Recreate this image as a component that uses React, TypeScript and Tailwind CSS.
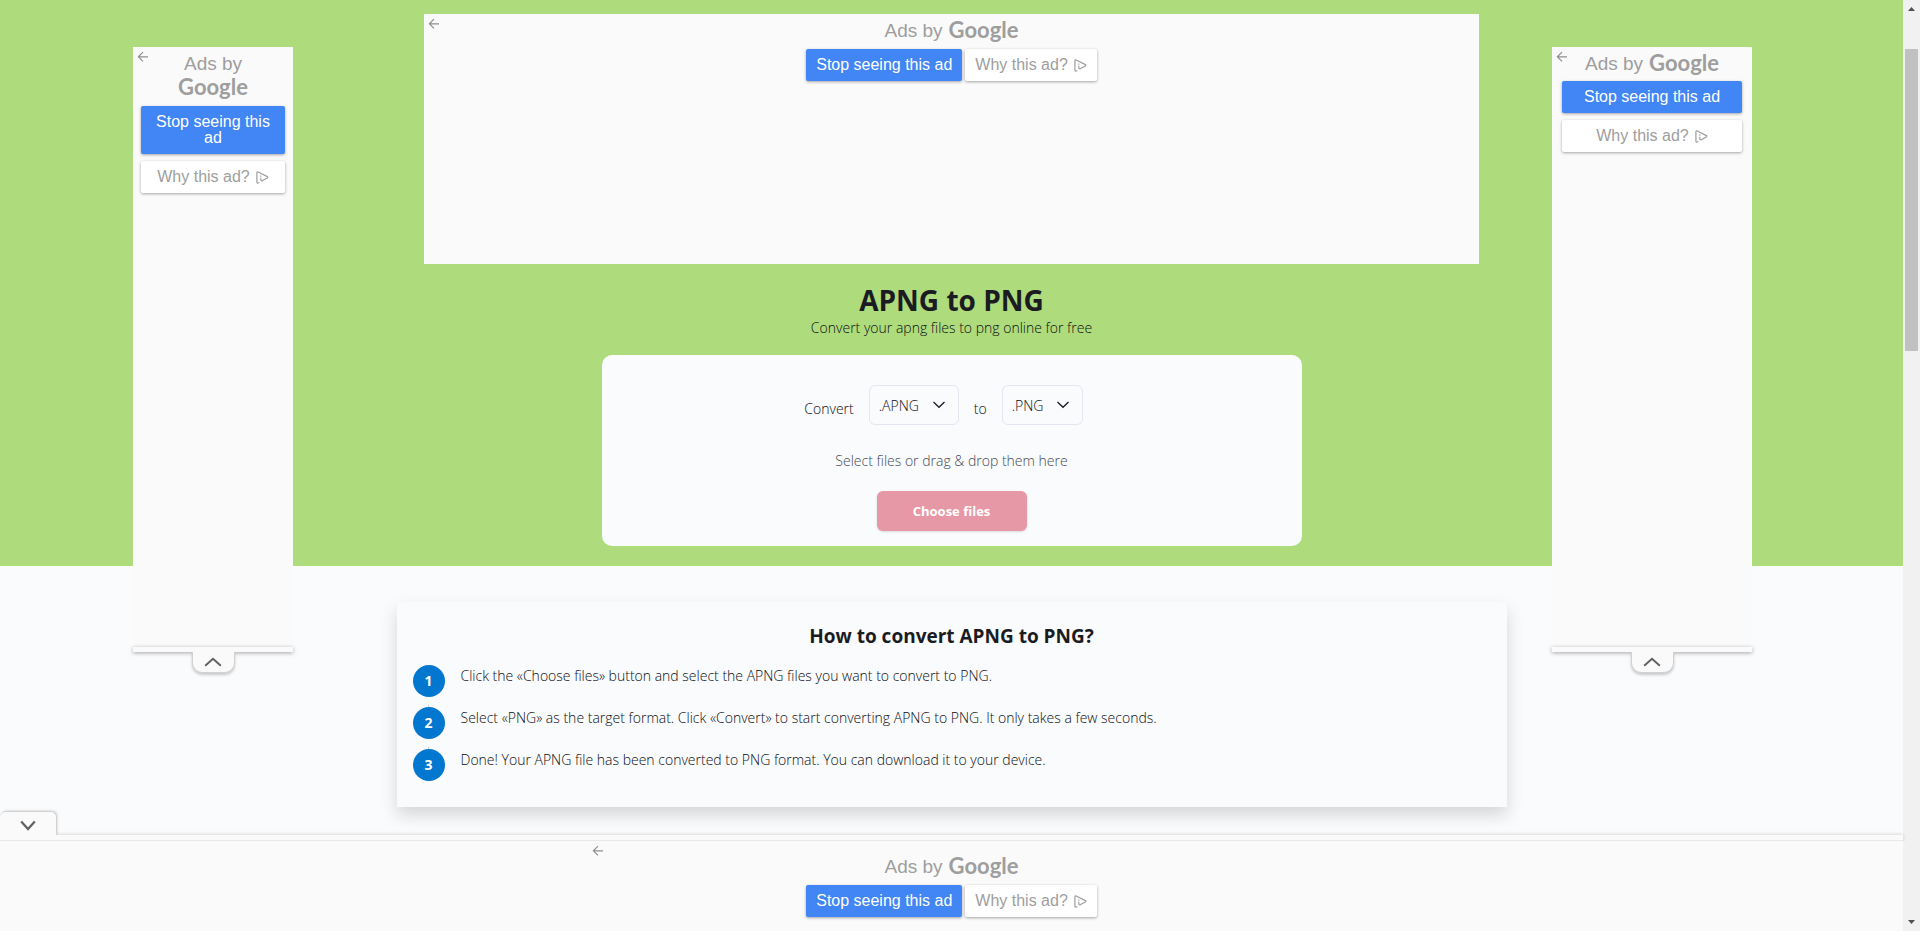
import {clsx} from 'clsx';

type AdLayout = 'inline' | 'stacked' | 'narrow';

const STEPS = [
  'Click the «Choose files» button and select the APNG files you want to convert to PNG.',
  'Select «PNG» as the target format. Click «Convert» to start converting APNG to PNG. It only takes a few seconds.',
  'Done! Your APNG file has been converted to PNG format. You can download it to your device.',
];

export default function App() {
  return (
    <div className="flex h-screen overflow-hidden bg-[#fafbfd] font-['Open_Sans',sans-serif] text-sm font-light text-[#0c0e12]">
      <main className="relative min-w-0 flex-1">
        <section className="flex flex-col items-center bg-[#aedc7c] pt-[14px] pb-5">
          <div className="relative h-[250px] w-full max-w-[1055px] bg-[#fafafa]">
            <AdContent layout="inline" />
          </div>
          <h1 className="mt-[18px] text-[28px] leading-9 font-bold text-[#1b1b22]">
            APNG to PNG
          </h1>
          <p className="leading-5">
            Convert your apng files to png online for free
          </p>
          <ConvertForm />
        </section>

        <section className="mx-auto mt-9 w-full max-w-[1110px] bg-[#fafbfd] px-4 pt-5 pb-4 shadow-[0_8px_16px_rgba(0,0,0,0.15)]">
          <h2 className="text-center text-[19px] leading-7 font-bold text-[#1b1b22]">
            How to convert APNG to PNG?
          </h2>
          <ol className="mt-[15px]">
            {STEPS.map((step, i) => (
              <Step key={step} number={i + 1} text={step} />
            ))}
          </ol>
        </section>

        <SideAd className="left-[133px] w-40" layout="narrow" />
        <SideAd className="right-[151px] w-[200px]" layout="stacked" />
        <AnchorAd />
      </main>
      <PageScrollbar />
    </div>
  );
}

function ConvertForm() {
  return (
    <form className="mt-[17px] flex w-full max-w-[700px] flex-col items-center rounded-[10px] bg-[#fafbfd] pt-[30px] pb-[15px]">
      <div className="mr-4 flex items-center gap-[15px]">
        <label htmlFor="from" className="pt-2">
          Convert
        </label>
        <FormatSelect id="from" value=".APNG" className="w-[90px]" />
        <label htmlFor="to" className="pt-2">
          to
        </label>
        <FormatSelect id="to" value=".PNG" className="w-[81px]" />
      </div>
      <p className="mt-[26px] leading-5 text-[#454a56]">
        Select files or drag &amp; drop them here
      </p>
      <button
        type="button"
        className="mt-5 h-10 w-[150px] rounded-md bg-[#e698a6] text-[13px] font-bold text-white shadow-sm"
      >
        Choose files
      </button>
    </form>
  );
}

function FormatSelect({
  id,
  value,
  className,
}: {
  id: string;
  value: string;
  className: string;
}) {
  return (
    <div className={clsx('relative', className)}>
      <select
        id={id}
        defaultValue={value}
        className="h-10 w-full appearance-none rounded-md border border-[#e4e5f1] bg-transparent pt-px pl-[9px]"
      >
        <option>{value}</option>
      </select>
      <svg
        className="pointer-events-none absolute top-4 right-[14px] h-2 w-3 text-[#1b1b22]"
        viewBox="0 0 12 8"
        fill="none"
        stroke="currentColor"
        strokeWidth="1.3"
      >
        <path d="M0.5 1 6 6.3 11.5 1" />
      </svg>
    </div>
  );
}

function Step({number, text}: {number: number; text: string}) {
  return (
    <li className="group flex gap-4">
      <div className="flex flex-col items-center">
        <span className="flex size-8 items-center justify-center rounded-full bg-[#0177d0] font-bold text-white">
          {number}
        </span>
        {/* Connector to the next step */}
        <span className="mt-2 h-0.5 w-px bg-[#cfcfd4] group-last:invisible" />
      </div>
      <p className="pt-px leading-5">{text}</p>
    </li>
  );
}

function AdContent({layout}: {layout: AdLayout}) {
  const inline = layout === 'inline';

  return (
    <div
      className={clsx(
        "pt-[5px] text-center font-['Liberation_Sans',sans-serif] font-normal",
        layout === 'stacked' && 'px-[10px]',
        layout === 'narrow' && 'px-2',
      )}
    >
      <button
        type="button"
        aria-label="Back"
        className="absolute top-1 left-1 text-[#8f8f8f]"
      >
        <svg className="size-3" viewBox="0 0 12 12" fill="none" stroke="currentColor" strokeWidth="1.2">
          <path d="M6 1.2 1.4 5.8 6 10.4M1.4 5.8H11" />
        </svg>
      </button>
      <div
        className={clsx(
          'flex justify-center text-[19px] leading-6 text-[#9e9e9e]',
          layout === 'narrow' ? 'flex-col items-center' : 'items-start gap-1.5',
        )}
      >
        <span>Ads by</span>
        <span className="font-['Lato',sans-serif] text-[22px] leading-[22px] font-bold">Google</span>
      </div>
      <div
        className={clsx(
          'flex justify-center text-base leading-4',
          layout === 'stacked' ? 'mt-[5px]' : 'mt-1.5',
          layout === 'narrow' && 'pt-0.5',
          inline ? 'items-center gap-[3px]' : 'flex-col gap-[7px]',
        )}
      >
        <button
          type="button"
          className="rounded-xs bg-[#4285f4] px-[10px] py-2 text-white shadow-[0_1px_3px_rgba(0,0,0,0.35)]"
        >
          Stop seeing this ad
        </button>
        <button
          type="button"
          className="flex items-center justify-center gap-1.5 rounded-xs bg-white px-[10px] py-2 text-[#9e9e9e] shadow-[0_1px_3px_rgba(0,0,0,0.35)]"
        >
          Why this ad?
          <AdChoicesIcon />
        </button>
      </div>
    </div>
  );
}

function AdChoicesIcon() {
  return (
    <svg className="h-[13px] w-[13px] shrink-0" viewBox="0 0 13 13" fill="none" stroke="currentColor" strokeWidth="1.2" strokeLinejoin="round">
      <path d="M3.4 11.5 2.2 12Q0.9 12.3 0.9 11V1.8Q0.9 0.4 2.2 1L11.4 5.6Q12.3 6.2 11.4 6.9L6.6 9.6Q4.8 10.3 4.8 8.8V6.8" />
      <path d="M4.8 4.5V5.7" />
    </svg>
  );
}

function SideAd({className, layout}: {className: string; layout: AdLayout}) {
  return (
    <aside className={clsx('absolute top-[47px] flex flex-col items-center', className)}>
      <div className="relative h-[600px] w-full bg-[#fafafa]">
        <AdContent layout={layout} />
      </div>
      <div className="relative h-[5px] w-full bg-[#fafafa] shadow-[0_1px_4px_rgba(0,0,0,0.35)]" />
      <button
        type="button"
        aria-label="Collapse ad"
        className="relative flex h-[21px] w-[43px] justify-center rounded-b-[10px] border border-t-0 border-[#d2d2d2] bg-[#fafafa] pt-[5px] text-[#616161] shadow-[0_2px_3px_rgba(0,0,0,0.2)]"
      >
        <svg className="h-[10px] w-[18px]" viewBox="0 0 18 10" fill="none" stroke="currentColor" strokeWidth="2">
          <path d="M1.2 8.8 9 1.8 16.8 8.8" />
        </svg>
      </button>
    </aside>
  );
}

function AnchorAd() {
  return (
    <aside className="absolute inset-x-0 bottom-0">
      <button
        type="button"
        aria-label="Hide ad"
        className="relative z-10 flex h-6 w-[57px] items-center justify-center rounded-t-md border border-b-0 border-l-0 border-[#d2d2d2] bg-[#fafafa] pt-1 text-[#616161] shadow-[1px_-1px_2px_rgba(0,0,0,0.1)]"
      >
        <svg className="h-[11px] w-4" viewBox="0 0 16 11" fill="none" stroke="currentColor" strokeWidth="2.2">
          <path d="M1.2 1.5 8 9 14.8 1.5" />
        </svg>
      </button>
      <div className="h-[5px] bg-[#fafafa] shadow-[0_0_4px_rgba(0,0,0,0.2)]" />
      <div className="relative border-t border-[#e8e8e8] bg-[#fafafa]">
        <div className="relative mx-auto h-[90px] max-w-[728px] pt-[9px]">
          <AdContent layout="inline" />
        </div>
      </div>
    </aside>
  );
}

function PageScrollbar() {
  return (
    <div className="flex w-[17px] flex-col items-center bg-[#f1f1f1] text-[#505050]">
      <svg className="h-[17px] w-[17px]" viewBox="0 0 17 17" fill="currentColor">
        <path d="M5 11 8.5 7 12 11z" />
      </svg>
      <div className="mt-8 h-[302px] w-[13px] bg-[#c1c1c1]" />
      <svg className="mt-auto h-[17px] w-[17px]" viewBox="0 0 17 17" fill="currentColor">
        <path d="M5 6 8.5 10 12 6z" />
      </svg>
    </div>
  );
}
